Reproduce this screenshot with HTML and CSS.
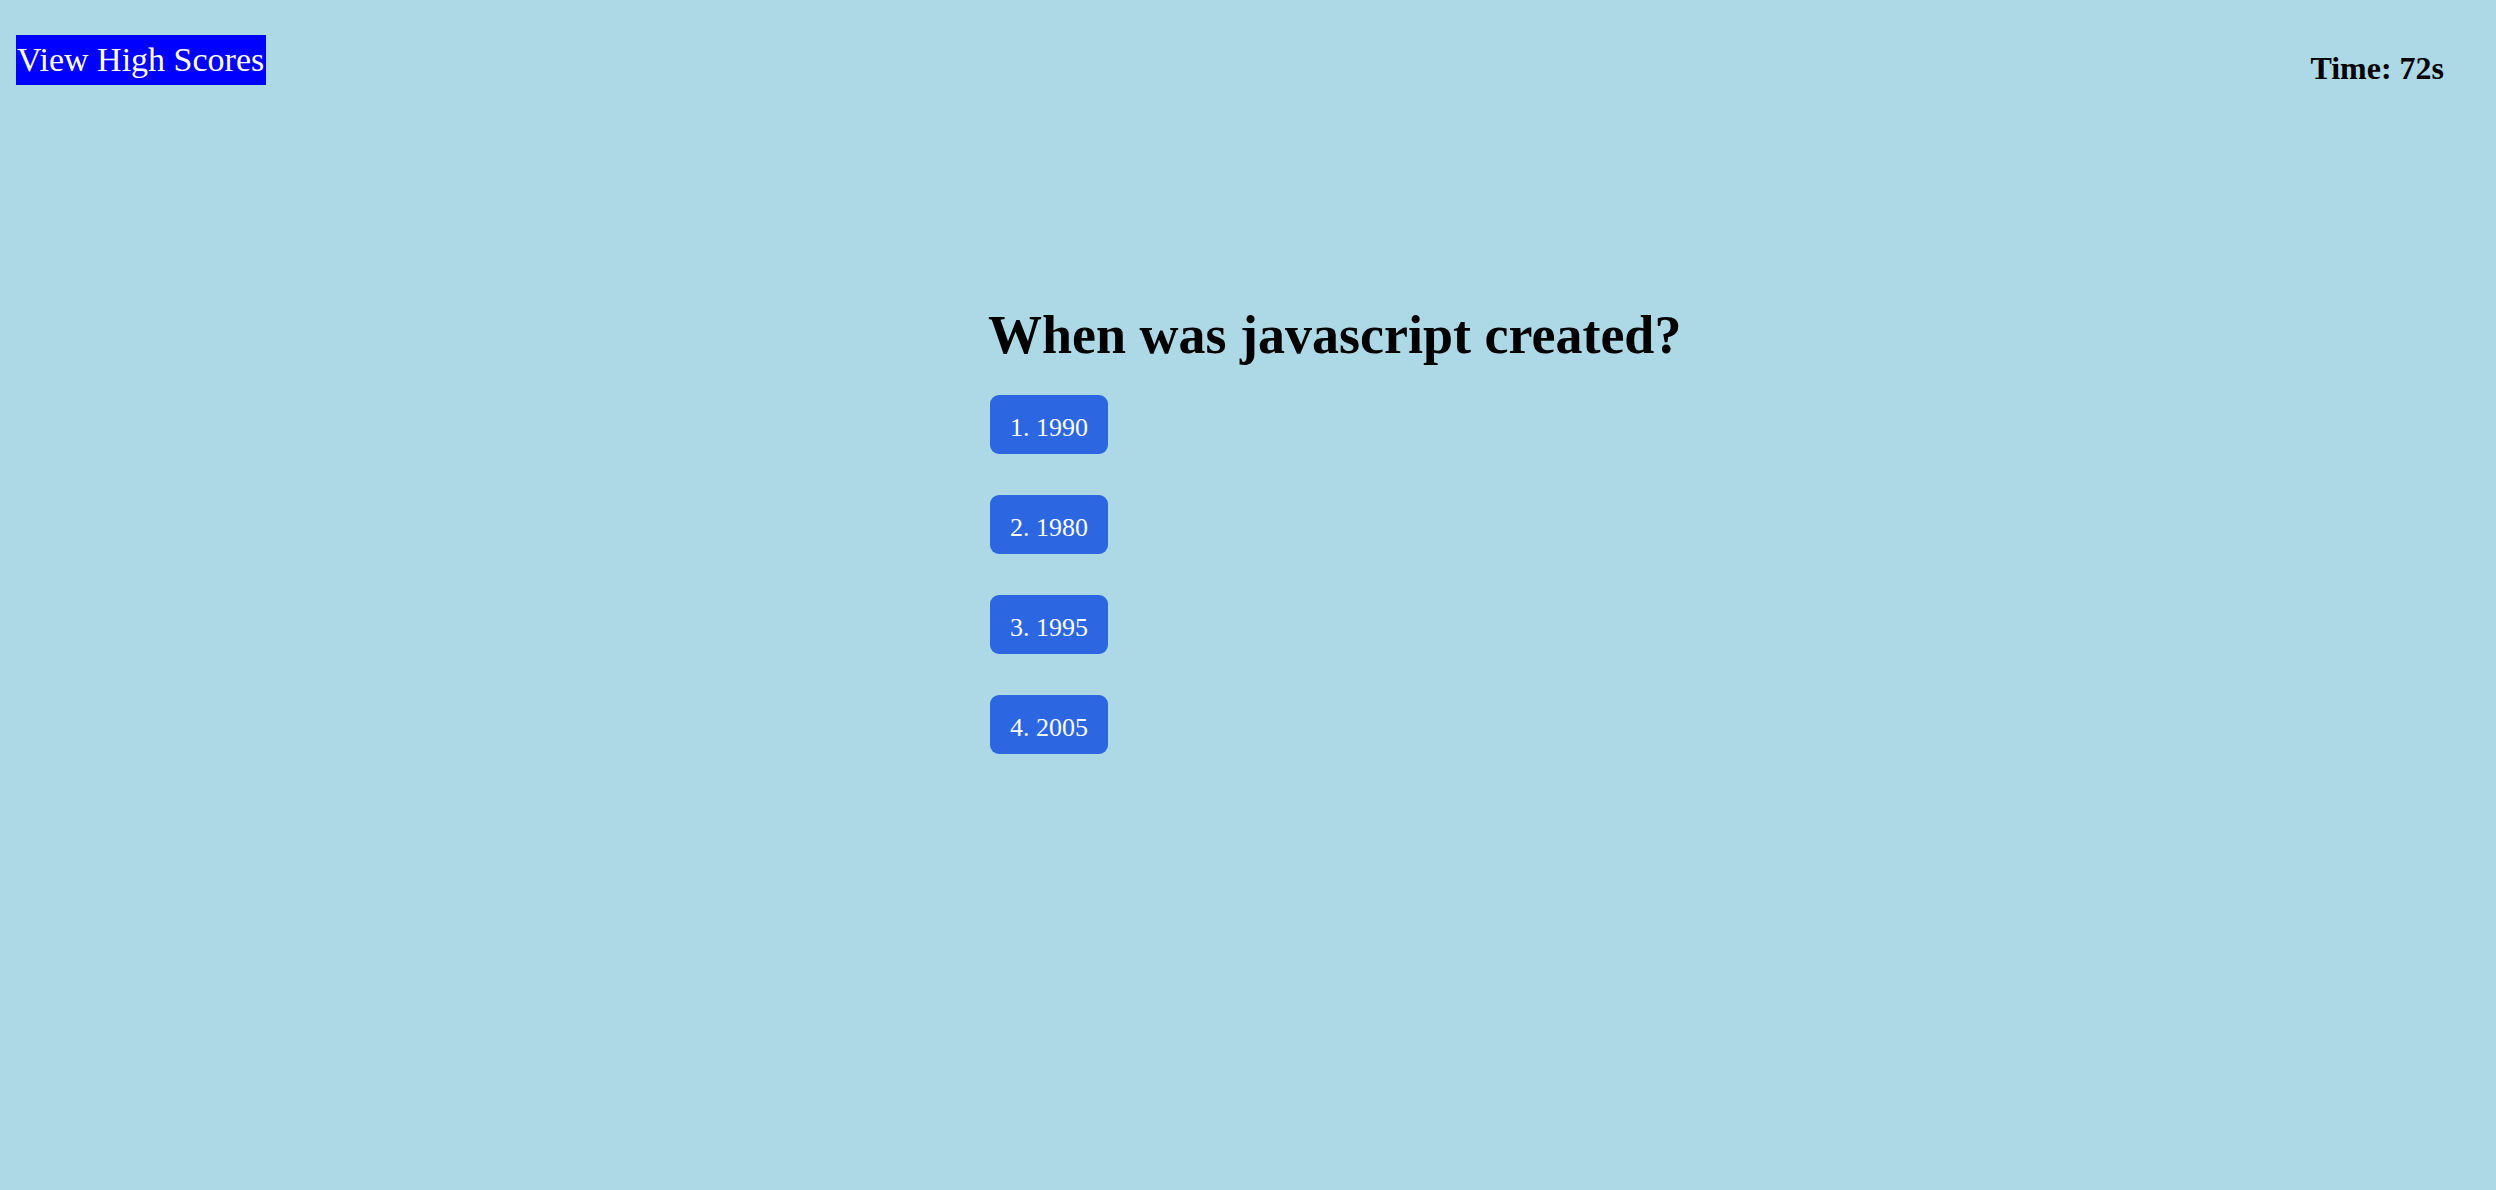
FILE: index.html
```html
<!DOCTYPE html>
<html lang="en">
<head>
<meta charset="utf-8">
<title>Code Quiz</title>
<link rel="stylesheet" href="styles.css">
</head>
<body>
<header class="top">
  <a class="scores" href="#">View High Scores</a>
  <div class="timer">Time: 72s</div>
</header>
<main class="quiz">
  <h1 class="question">When was javascript created?</h1>
  <div class="choices">
    <button class="choice">1. 1990</button>
    <button class="choice">2. 1980</button>
    <button class="choice">3. 1995</button>
    <button class="choice">4. 2005</button>
  </div>
</main>
</body>
</html>
```
FILE: styles.css
```css
html, body {
  margin: 0;
  padding: 0;
}
body {
  background: #add8e6;
  font-family: "Liberation Serif", "Times New Roman", serif;
  color: #000;
  min-height: 1190px;
}
.top {
  display: flex;
  justify-content: space-between;
  align-items: flex-start;
  height: 54px;
  padding: 35px 52px 0 16px;
}
.scores {
  display: block;
  background: #0000ff;
  color: #fff;
  text-decoration: none;
  font-size: 34px;
  line-height: 50px;
  height: 50px;
  padding: 0 2px 0 1px;
}
.timer {
  font-weight: bold;
  font-size: 32px;
  line-height: 36px;
  padding-top: 15px;
}
.quiz {
  width: 520px;
  margin: 0 auto;
  padding-top: 216px;
}
.question {
  margin: 0;
  font-size: 54px;
  line-height: 60px;
  font-weight: bold;
  white-space: nowrap;
}
.choices {
  display: flex;
  flex-direction: column;
  align-items: flex-start;
  gap: 41px;
  margin-top: 30px;
  margin-left: 2px;
}
.choice {
  font-family: "Liberation Serif", "Times New Roman", serif;
  font-size: 26px;
  line-height: 30px;
  color: #fff;
  background: #2c66e0;
  border: none;
  border-radius: 9px;
  padding: 18px 20px 11px 20px;
  height: 59px;
  cursor: pointer;
}
```
